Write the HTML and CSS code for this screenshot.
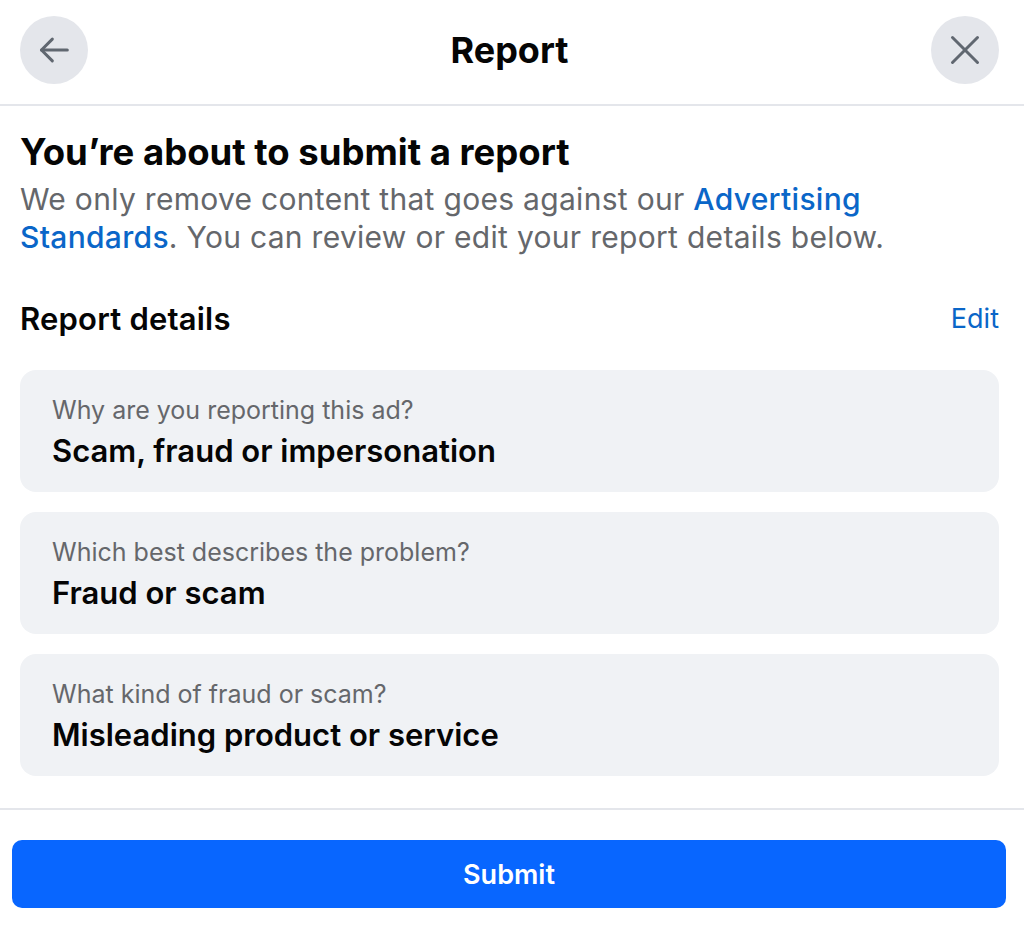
FILE: index.html
```html
<!DOCTYPE html>
<html lang="en">
<head>
  <meta charset="UTF-8" />
  <title>Report</title>
  <link rel="stylesheet" href="styles.css">
</head>
<body>

<header class="topbar">
  <button class="circle-btn" aria-label="Back">
    <svg width="40" height="40" viewBox="0 0 24 24" fill="none" stroke="#606770" stroke-width="1.8" stroke-linecap="round" stroke-linejoin="round">
      <path d="M20 12H4.5" />
      <path d="M11 5.5L4.5 12l6.5 6.5" />
    </svg>
  </button>
  <h1>Report</h1>
  <button class="circle-btn" aria-label="Close">
    <svg width="40" height="40" viewBox="0 0 24 24" fill="none" stroke="#606770" stroke-width="1.8" stroke-linecap="round">
      <path d="M4.5 4.5l15 15" />
      <path d="M19.5 4.5l-15 15" />
    </svg>
  </button>
</header>

<main>
  <section class="intro">
    <h2>You’re about to submit a report</h2>
    <p>We only remove content that goes against our <a href="#">Advertising Standards</a>. You can review or edit your report details below.</p>
  </section>

  <div class="details-head">
    <h3>Report details</h3>
    <a href="#" class="edit">Edit</a>
  </div>

  <div class="cards">
    <div class="card">
      <div class="label">Why are you reporting this ad?</div>
      <div class="value">Scam, fraud or impersonation</div>
    </div>
    <div class="card">
      <div class="label">Which best describes the problem?</div>
      <div class="value">Fraud or scam</div>
    </div>
    <div class="card">
      <div class="label">What kind of fraud or scam?</div>
      <div class="value">Misleading product or service</div>
    </div>
  </div>
</main>

<footer>
  <button class="submit">Submit</button>
</footer>

</body>
</html>
```

FILE: styles.css
```css
:root {
  --blue: #0866ff;
  --link: #0a66c8;
  --muted: #65676b;
  --card-bg: #f0f2f5;
  --line: #e4e6eb;
}

body {
  font-family: Inter, 'Noto Sans', sans-serif;
  background: #ffffff;
  color: #050505;
  margin: 0;
  padding: 0;
}

.topbar {
  display: flex;
  align-items: center;
  justify-content: space-between;
  padding: 0 25px 0 20px;
  border-bottom: 2px solid var(--line);
  box-sizing: border-box;
  height: 106px;
}

.topbar h1 {
  margin: -4px 0 0;
  font-size: 36px;
  font-weight: 700;
}

.circle-btn {
  width: 68px;
  height: 68px;
  border-radius: 50%;
  border: none;
  background: var(--line);
  display: flex;
  align-items: center;
  justify-content: center;
  padding: 0;
  margin-top: -5px;
}

main {
  padding: 0 20px;
}

.intro h2 {
  margin: 26px 0 8px;
  font-size: 36.5px;
  font-weight: 700;
  line-height: 40px;
}

.intro p {
  margin: 0;
  font-size: 30px;
  line-height: 38px;
  color: var(--muted);
  letter-spacing: 0.3px;
}

.intro a,
.edit {
  color: var(--link);
  text-decoration: none;
}

.intro a {
  font-weight: 500;
}

.details-head {
  display: flex;
  justify-content: space-between;
  align-items: center;
  margin: 44px 0 33px;
}

.details-head h3 {
  margin: 0;
  font-size: 31px;
  font-weight: 600;
  letter-spacing: 0.2px;
}

.edit {
  font-size: 27px;
  margin-right: 5px;
}

.cards {
  display: flex;
  flex-direction: column;
  gap: 20px;
  margin-right: 5px;
}

.card {
  background: var(--card-bg);
  border-radius: 16px;
  height: 122px;
  box-sizing: border-box;
  padding: 25px 32px 0;
}

.card .label {
  font-size: 25px;
  color: var(--muted);
  line-height: 30px;
}

.card .value {
  margin-top: 7px;
  font-size: 31px;
  font-weight: 600;
  line-height: 38px;
}

footer {
  margin-top: 32px;
  border-top: 2px solid var(--line);
  padding: 30px 18px 0 12px;
}

.submit {
  width: 100%;
  height: 68px;
  border: none;
  border-radius: 10px;
  background: var(--blue);
  color: #ffffff;
  font-family: inherit;
  font-size: 27px;
  font-weight: 600;
}
```
